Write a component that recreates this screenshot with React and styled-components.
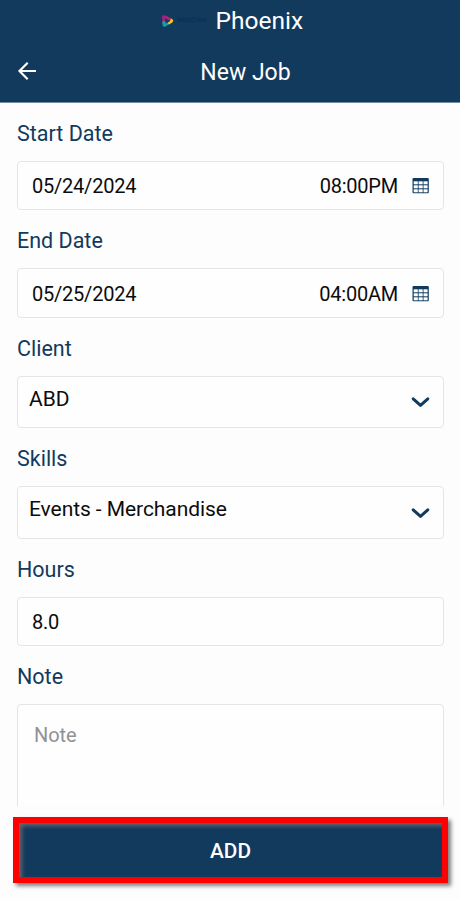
import React from 'react';
import styled, { createGlobalStyle } from 'styled-components';

const GlobalStyle = createGlobalStyle`
    * {
        box-sizing: border-box;
    }
    body {
        margin: 0;
        background: #fdfdfd;
        font-family: Roboto, "Liberation Sans", sans-serif;
    }
`;

const Screen = styled.div`
    width: 460px;
    height: 900px;
    display: flex;
    flex-direction: column;
    overflow: hidden;
`;

const Header = styled.header`
    height: 103px;
    flex-shrink: 0;
    background: #113a5d;
    border-bottom: 1px solid #6f8aa3;
    color: #fff;
`;

const BrandBar = styled.div`
    height: 41px;
    display: flex;
    align-items: center;
    padding-left: 161px;
`;

const BrandName = styled.span`
    width: 38px;
    padding: 0 0 1px 2px;
    font-size: 7px;
    font-weight: 500;
    line-height: 12px;
    letter-spacing: -0.1px;
    color: #0b2f58;
`;

const Company = styled.span`
    font-size: 24.5px;
    line-height: 41px;
    margin-left: 2.6px;
`;

const TitleBar = styled.div`
    height: 61px;
    display: grid;
    grid-template-columns: 60px 1fr 60px;
    align-items: center;
`;

const BackButton = styled.button`
    border: 0;
    padding: 0 0 2px 17px;
    background: none;
    color: #fff;
    display: flex;
`;

const Title = styled.h1`
    margin: 0;
    padding: 1px 0 0 31px;
    text-align: center;
    font-size: 23px;
    font-weight: 400;
    line-height: 61px;
`;

const Form = styled.main`
    height: 703px;
    flex-shrink: 0;
    padding: 0 16px 0 17px;
    overflow: hidden;
`;

const Label = styled.label`
    display: block;
    height: 58px;
    padding-top: 1.8px;
    font-size: 21.5px;
    line-height: 58px;
    color: #113a5d;
`;

const Field = styled.div`
    height: 49.45px;
    display: flex;
    align-items: center;
    padding: 1px 14px 0;
    border: 1px solid #e4e5e7;
    border-radius: 4px;
    background: #fefefe;
    font-size: 20px;
    letter-spacing: -0.22px;
    color: #0c0c0c;
`;

const SelectField = styled(Field)`
    height: 52.5px;
    justify-content: space-between;
    padding: 0 13px 0 11px;
    font-size: 21px;
    letter-spacing: -0.07px;
`;

const SelectText = styled.span`
    padding-bottom: 7px;
`;

const Time = styled.span`
    margin-left: auto;
    margin-right: 14px;
`;

const NoteField = styled(Field)`
    height: 130px;
    align-items: flex-start;
    padding: 18px 16px;
    line-height: 24px;
    letter-spacing: -0.1px;
    color: #919196;
`;

const Footer = styled.footer`
    padding: 11px 12px 0 13px;
`;

const AddButton = styled.button`
    display: block;
    width: 435px;
    height: 66px;
    padding: 2px 0 0;
    border: 6px solid #fe0000;
    background: #113a5d;
    box-shadow: 3px 3px 4px rgba(0, 0, 0, 0.5), inset 3px 3px 4px rgba(125, 110, 110, 0.8);
    color: #fff;
    font-family: inherit;
    font-size: 20.8px;
    font-weight: 500;
`;

const BrandMark = () => (
    <svg width="14" height="14" viewBox="0 0 14 14">
        <path d="M1 2.5Q1 1 3 1.2L7 2.7 5.3 5 4.3 4.3V8L1.5 10Z" fill="#9b2383" />
        <path d="M1.3 7.5 4.3 7 5 9.2 7.5 8 8.5 10 4.5 12.5Q2 13.5 1.5 11Z" fill="#159fae" />
        <path d="M9 4 11 5Q13.5 6.8 11 8.7L8 10.6 6.8 8.8 9 7Z" fill="#f5c51b" />
        <path d="M4 2 7.2 2.7 10 4.5 9 7 5 4.8Z" fill="#b0246f" />
        <path d="M4.4 4.6 8.6 7 4.8 9.2Z" fill="#113a5d" />
    </svg>
);

const BackIcon = () => (
    <svg width="20" height="20" viewBox="0 0 20 20" fill="none" stroke="currentColor" strokeWidth="2.2">
        <path d="M19 10H2.5M10.7 1.8 2.5 10l8.2 8.2" />
    </svg>
);

const CalendarIcon = () => (
    <svg width="17" height="16" viewBox="0 0 17 16">
        <rect x="0.5" y="0" width="16.3" height="15.2" rx="1" fill="#113a5d" />
        <g fill="#fefefe">
            {[3.3, 7.3, 11.3].map((y) =>
                [1.7, 6.6, 11.5].map((x) => (
                    <rect key={`${x}-${y}`} x={x} y={y} width="4.1" height="3" />
                ))
            )}
        </g>
    </svg>
);

const ChevronIcon = () => (
    <svg width="19" height="12" viewBox="0 0 19 12" fill="none" stroke="#113a5d" strokeWidth="3" strokeLinecap="round" strokeLinejoin="round">
        <path d="M2.2 2.8 9.5 9.4 16.8 2.8" />
    </svg>
);

const DateField = ({ label, date, time }) => (
    <>
        <Label>{label}</Label>
        <Field>
            <span>{date}</span>
            <Time>{time}</Time>
            <CalendarIcon />
        </Field>
    </>
);

const Select = ({ label, value }) => (
    <>
        <Label>{label}</Label>
        <SelectField>
            <SelectText>{value}</SelectText>
            <ChevronIcon />
        </SelectField>
    </>
);

const App = () => {
    return (
        <Screen>
            <GlobalStyle />
            <Header>
                <BrandBar>
                    <BrandMark />
                    <BrandName>NextCrew</BrandName>
                    <Company>Phoenix</Company>
                </BrandBar>
                <TitleBar>
                    <BackButton aria-label="Back">
                        <BackIcon />
                    </BackButton>
                    <Title>New Job</Title>
                </TitleBar>
            </Header>
            <Form>
                <DateField label="Start Date" date="05/24/2024" time="08:00PM" />
                <DateField label="End Date" date="05/25/2024" time="04:00AM" />
                <Select label="Client" value="ABD" />
                <Select label="Skills" value="Events - Merchandise" />
                <Label>Hours</Label>
                <Field>8.0</Field>
                <Label>Note</Label>
                <NoteField>Note</NoteField>
            </Form>
            <Footer>
                <AddButton>ADD</AddButton>
            </Footer>
        </Screen>
    );
};

export default App;
